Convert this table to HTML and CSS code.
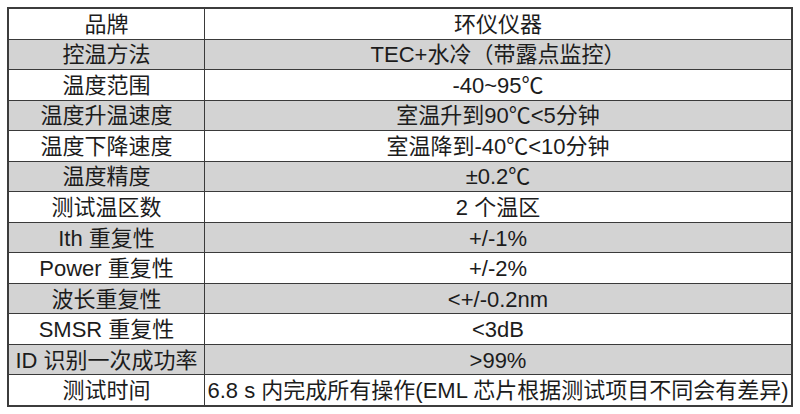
FILE: index.html
```html
<!DOCTYPE html>
<html lang="zh">
<head>
<meta charset="utf-8">
<link rel="stylesheet" href="styles.css">
</head>
<body>
<table class="spec">
  <tr><td class="k">品牌</td><td>环仪仪器</td></tr>
  <tr class="g"><td class="k">控温方法</td><td>TEC+水冷（带露点监控）</td></tr>
  <tr><td class="k">温度范围</td><td>-40~95℃</td></tr>
  <tr class="g"><td class="k">温度升温速度</td><td>室温升到90℃&lt;5分钟</td></tr>
  <tr><td class="k">温度下降速度</td><td>室温降到-40℃&lt;10分钟</td></tr>
  <tr class="g"><td class="k">温度精度</td><td>±0.2℃</td></tr>
  <tr><td class="k">测试温区数</td><td>2 个温区</td></tr>
  <tr class="g"><td class="k">Ith 重复性</td><td>+/-1%</td></tr>
  <tr><td class="k">Power 重复性</td><td>+/-2%</td></tr>
  <tr class="g"><td class="k">波长重复性</td><td>&lt;+/-0.2nm</td></tr>
  <tr><td class="k">SMSR 重复性</td><td>&lt;3dB</td></tr>
  <tr class="g"><td class="k">ID 识别一次成功率</td><td>&gt;99%</td></tr>
  <tr><td class="k">测试时间</td><td>6.8 s 内完成所有操作(EML 芯片根据测试项目不同会有差异)</td></tr>
</table>
</body>
</html>
```
FILE: styles.css
```css
html, body {
  margin: 0;
  padding: 0;
  background: #ffffff;
}
body {
  padding: 7px;
  font-family: "Liberation Sans", "Noto Sans CJK SC", sans-serif;
  font-size: 22px;
  color: #1c1c1c;
}
.spec {
  border-collapse: collapse;
  border: 2px solid #3c3c3c;
  width: 786px;
  height: 400px;
  table-layout: fixed;
}
.spec td {
  border: 1px solid #3a3a3a;
  padding: 2px 0 0 0;
  text-align: center;
  vertical-align: middle;
  line-height: 26px;
  white-space: nowrap;
}
.spec td.k {
  width: 195px;
}
.spec tr.g td {
  background: #d3d3d3;
}
```
